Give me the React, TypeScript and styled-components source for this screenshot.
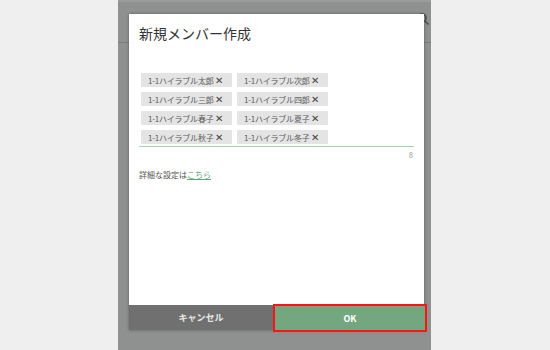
import styled, { createGlobalStyle } from 'styled-components';

const GlobalStyle = createGlobalStyle`
  html, body {
    margin: 0;
    padding: 0;
    background: #efefef;
  }
  body {
    font-family: "Noto Sans CJK JP", "Noto Sans", sans-serif;
  }
`;

const members = [
  '1-1ハイラブル太郎',
  '1-1ハイラブル次郎',
  '1-1ハイラブル三郎',
  '1-1ハイラブル四郎',
  '1-1ハイラブル春子',
  '1-1ハイラブル夏子',
  '1-1ハイラブル秋子',
  '1-1ハイラブル冬子',
];

const App = () => {
  return (
    <>
      <GlobalStyle />
      <Page>
        <Screen>
          <Header>
            <SearchIcon width="14" height="14" viewBox="0 0 14 14">
              <circle cx="6" cy="6" r="4" fill="none" stroke="#4e4e4e" strokeWidth="1.6" />
              <line x1="9" y1="9" x2="12.5" y2="12.5" stroke="#4e4e4e" strokeWidth="1.6" />
            </SearchIcon>
          </Header>
          <Dialog>
            <Body>
              <Title>新規メンバー作成</Title>
              <ChipField>
                {members.map((name) => (
                  <Chip key={name}>
                    {name}
                    <Close>✕</Close>
                  </Chip>
                ))}
              </ChipField>
              <Counter>{members.length}</Counter>
              <Note>
                詳細な設定は<Link>こちら</Link>
              </Note>
            </Body>
            <Actions>
              <ActionButton>キャンセル</ActionButton>
              <ActionButton primary>OK</ActionButton>
            </Actions>
          </Dialog>
        </Screen>
      </Page>
    </>
  );
};

export default App;

const Page = styled.div`
  width: 550px;
  height: 350px;
  display: flex;
  padding-left: 118px;
  box-sizing: border-box;
  overflow: hidden;
`;

const Screen = styled.div`
  position: relative;
  width: 313px;
  height: 350px;
  background: #8f9090;
  border-top: 2px solid #9a9b9b;
  box-sizing: border-box;
`;

const Header = styled.div`
  height: 41px;
  border-bottom: 1px solid #7b7c7c;
  display: flex;
  align-items: center;
  justify-content: flex-end;
  padding-right: 1px;
  box-sizing: border-box;
`;

const SearchIcon = styled.svg`
  margin-top: -6px;
`;

const Dialog = styled.div`
  position: absolute;
  left: 11px;
  top: 12px;
  width: 295px;
  height: 316px;
  display: flex;
  flex-direction: column;
  box-shadow: 0 0 3px rgba(0, 0, 0, 0.35);
`;

const Body = styled.div`
  flex: 1;
  background: #fff;
  padding: 8px 10px 0 10px;
`;

const Title = styled.h1`
  margin: 0;
  font-size: 14px;
  line-height: 22px;
  font-weight: 400;
  color: #333;
`;

const ChipField = styled.div`
  margin-top: 29px;
  display: grid;
  grid-template-columns: 91px 91px;
  column-gap: 5px;
  row-gap: 5px;
  padding: 0 0 2px 2px;
  border-bottom: 1px solid #a6d4ae;
`;

const Chip = styled.span`
  height: 14px;
  background: #e4e4e4;
  color: #5a5a5a;
  font-size: 8px;
  line-height: 14px;
  padding-left: 7px;
  white-space: nowrap;
  letter-spacing: -0.2px;
`;

const Close = styled.span`
  margin-left: 1px;
  font-size: 9.5px;
  color: #444;
`;

const Counter = styled.div`
  text-align: right;
  font-size: 7.5px;
  line-height: 12px;
  color: #9a9a9a;
  padding-right: 1px;
  margin-top: 2px;
`;

const Note = styled.div`
  margin-top: 8px;
  font-size: 8px;
  line-height: 12px;
  color: #555;
`;

const Link = styled.a`
  color: #62a873;
  text-decoration: underline;
`;

const Actions = styled.div`
  display: flex;
  height: 25px;
`;

const ActionButton = styled.button<{ primary?: boolean }>`
  flex: ${(p) => (p.primary ? 1 : '0 0 144px')};
  box-sizing: border-box;
  border: ${(p) => (p.primary ? '2px solid #ff1414' : 'none')};
  margin: ${(p) => (p.primary ? '-1px -3px -2px 0' : '0')};
  padding: 0;
  font-family: "Noto Sans CJK JP", "Noto Sans", sans-serif;
  font-size: 9px;
  font-weight: 700;
  color: ${(p) => (p.primary ? '#ffffff' : '#e8e8e8')};
  background: ${(p) => (p.primary ? '#74a77f' : '#707070')};
  position: relative;
`;
